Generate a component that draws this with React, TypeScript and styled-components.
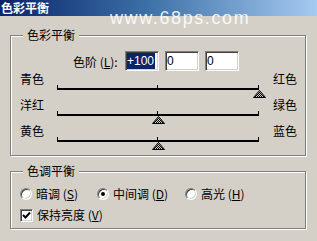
import styled, { createGlobalStyle } from "styled-components";
import { useId } from "react";

type Balance = {
  left: string;
  right: string;
  value: number;
};

const balances: Balance[] = [
  { left: "青色", right: "红色", value: 100 },
  { left: "洋红", right: "绿色", value: 0 },
  { left: "黄色", right: "蓝色", value: 0 },
];

const Thumb = ({ value }: { value: number }) => {
  const id = useId();
  return (
    <ThumbSvg
      width="13"
      height="8"
      viewBox="0 0 13 8"
      style={{ left: `calc(${(value + 100) / 2}% - 6px)` }}
    >
      <defs>
        <pattern id={id} width="2" height="2" patternUnits="userSpaceOnUse">
          <rect width="2" height="2" fill="#d4d0c8" />
          <rect width="1" height="1" fill="#000" />
          <rect x="1" y="1" width="1" height="1" fill="#000" />
        </pattern>
      </defs>
      <polygon points="6.5,0.5 12.5,7.5 0.5,7.5" fill={`url(#${id})`} stroke="#000" strokeWidth="1" />
    </ThumbSvg>
  );
};

export default function App() {
  return (
    <Dialog>
      <GlobalStyle />
      <TitleBar>色彩平衡</TitleBar>
      <Watermark>www.68ps.com</Watermark>
      <Body>
        <Group>
          <Legend>色彩平衡</Legend>
          <LevelRow>
            <LevelLabel>
              色阶 (<u>L</u>):
            </LevelLabel>
            <Field>
              <Selected>+100</Selected>
            </Field>
            <Field>0</Field>
            <Field>0</Field>
          </LevelRow>
          {balances.map((b) => (
            <SliderRow key={b.left}>
              <SideLabel>{b.left}</SideLabel>
              <Track>
                <Rail>
                  <CenterTick />
                </Rail>
                <Thumb value={b.value} />
              </Track>
              <RightLabel>{b.right}</RightLabel>
            </SliderRow>
          ))}
        </Group>

        <Group $gap={8} $bottom={6}>
          <Legend>色调平衡</Legend>
          <RadioRow>
            <Option>
              <Radio />
              <span>
                暗调 (<u>S</u>)
              </span>
            </Option>
            <Option>
              <Radio $checked />
              <span>
                中间调 (<u>D</u>)
              </span>
            </Option>
            <Option>
              <Radio />
              <span>
                高光 (<u>H</u>)
              </span>
            </Option>
          </RadioRow>
          <CheckRow>
            <CheckBox>
              <svg width="9" height="9" viewBox="0 0 9 9">
                <path d="M1 4 L3.5 6.5 L8 1.5" stroke="#000" strokeWidth="2" fill="none" />
              </svg>
            </CheckBox>
            <span>
              保持亮度 (<u>V</u>)
            </span>
          </CheckRow>
        </Group>
      </Body>
    </Dialog>
  );
}

const GlobalStyle = createGlobalStyle`
  html, body {
    margin: 0;
    padding: 0;
  }
  body {
    background: #d4d0c8;
    font-family: "Noto Sans CJK SC", "Liberation Sans", sans-serif;
    font-size: 12px;
    color: #000;
  }
`;

const Dialog = styled.div`
  position: relative;
  width: 317px;
  height: 241px;
  background: #d4d0c8;
  overflow: hidden;
`;

const TitleBar = styled.div`
  height: 16px;
  padding-left: 1px;
  background: linear-gradient(to right, #0a246a 0%, #3a6ea5 45%, #a6caf0 100%);
  color: #fff;
  font-weight: bold;
  font-size: 12px;
  line-height: 16px;
`;

const Watermark = styled.div`
  position: absolute;
  left: 110px;
  top: 9px;
  font-family: "Liberation Sans", Arial, sans-serif;
  font-size: 18px;
  line-height: 18px;
  letter-spacing: 1.6px;
  color: rgba(255, 255, 255, 0.88);
  pointer-events: none;
`;

const Body = styled.div`
  padding: 12px 0 0 10px;
  display: flex;
  flex-direction: column;
`;

const Group = styled.fieldset<{ $gap?: number; $bottom?: number }>`
  box-sizing: border-box;
  width: 296px;
  margin: ${(p) => p.$gap ?? 0}px 0 0 0;
  padding: 0 0 ${(p) => p.$bottom ?? 6}px 0;
  border: 1px solid #808080;
  box-shadow: inset 1px 1px 0 #fff, 1px 1px 0 #fff;
  min-width: 0;
`;

const Legend = styled.legend`
  margin-left: 12px;
  padding: 0 4px;
  line-height: 14px;
  background: #d4d0c8;
`;

const LevelRow = styled.div`
  display: flex;
  align-items: center;
  gap: 6px;
  margin-top: 9px;
  padding-left: 62px;
`;

const LevelLabel = styled.span`
  width: 46px;
  white-space: nowrap;
`;

const Field = styled.div`
  box-sizing: border-box;
  width: 34px;
  height: 20px;
  background: #fff;
  border: 1px solid;
  border-color: #808080 #fff #fff #808080;
  box-shadow: inset 1px 1px 0 #404040, inset -1px -1px 0 #d4d0c8;
  padding: 1px;
  font-family: "Liberation Sans", Arial, sans-serif;
  font-size: 12px;
  line-height: 16px;
`;

const Selected = styled.span`
  display: inline-block;
  background: #0a246a;
  color: #fff;
  padding-right: 1px;
`;

const SliderRow = styled.div`
  display: flex;
  align-items: flex-start;
  height: 26px;
  padding-left: 9px;
  &:first-of-type {
    margin-top: 4px;
  }
`;

const SideLabel = styled.span`
  width: 37px;
  line-height: 14px;
  margin-top: 1px;
`;

const RightLabel = styled(SideLabel)`
  width: auto;
  margin-left: 14px;
`;

const Track = styled.div`
  position: relative;
  width: 202px;
  height: 26px;
`;

const Rail = styled.div`
  position: relative;
  margin-top: 17px;
  height: 2px;
  background: #000;

  &::before,
  &::after {
    content: "";
    position: absolute;
    bottom: 0;
    width: 1px;
    height: 5px;
    background: #000;
  }
  &::before {
    left: 0;
  }
  &::after {
    right: 0;
  }
`;

const CenterTick = styled.div`
  position: absolute;
  left: 100px;
  bottom: 0;
  width: 1px;
  height: 5px;
  background: #000;
`;

const ThumbSvg = styled.svg`
  position: absolute;
  top: 19px;
  display: block;
`;

const RadioRow = styled.div`
  display: grid;
  grid-template-columns: 77px 88px auto;
  align-items: center;
  margin-top: 9px;
  padding-left: 9px;
  height: 13px;
`;

const Option = styled.label`
  display: flex;
  align-items: center;
  gap: 4px;
  white-space: nowrap;
  line-height: 14px;
`;

const Radio = styled.span<{ $checked?: boolean }>`
  box-sizing: border-box;
  position: relative;
  width: 12px;
  height: 12px;
  border-radius: 50%;
  background: #fff;
  border: 1px solid;
  border-color: #808080 #fff #fff #808080;
  box-shadow: inset 1px 1px 0 #404040, inset -1px -1px 0 #d4d0c8;

  &::after {
    content: "";
    display: ${(p) => (p.$checked ? "block" : "none")};
    position: absolute;
    left: 3px;
    top: 3px;
    width: 4px;
    height: 4px;
    border-radius: 50%;
    background: #000;
  }
`;

const CheckRow = styled.label`
  display: flex;
  align-items: center;
  gap: 4px;
  margin-top: 8px;
  padding-left: 9px;
  line-height: 14px;
`;

const CheckBox = styled.span`
  box-sizing: border-box;
  display: flex;
  align-items: center;
  justify-content: center;
  width: 13px;
  height: 13px;
  background: #fff;
  border: 1px solid;
  border-color: #808080 #fff #fff #808080;
  box-shadow: inset 1px 1px 0 #404040, inset -1px -1px 0 #d4d0c8;
`;
